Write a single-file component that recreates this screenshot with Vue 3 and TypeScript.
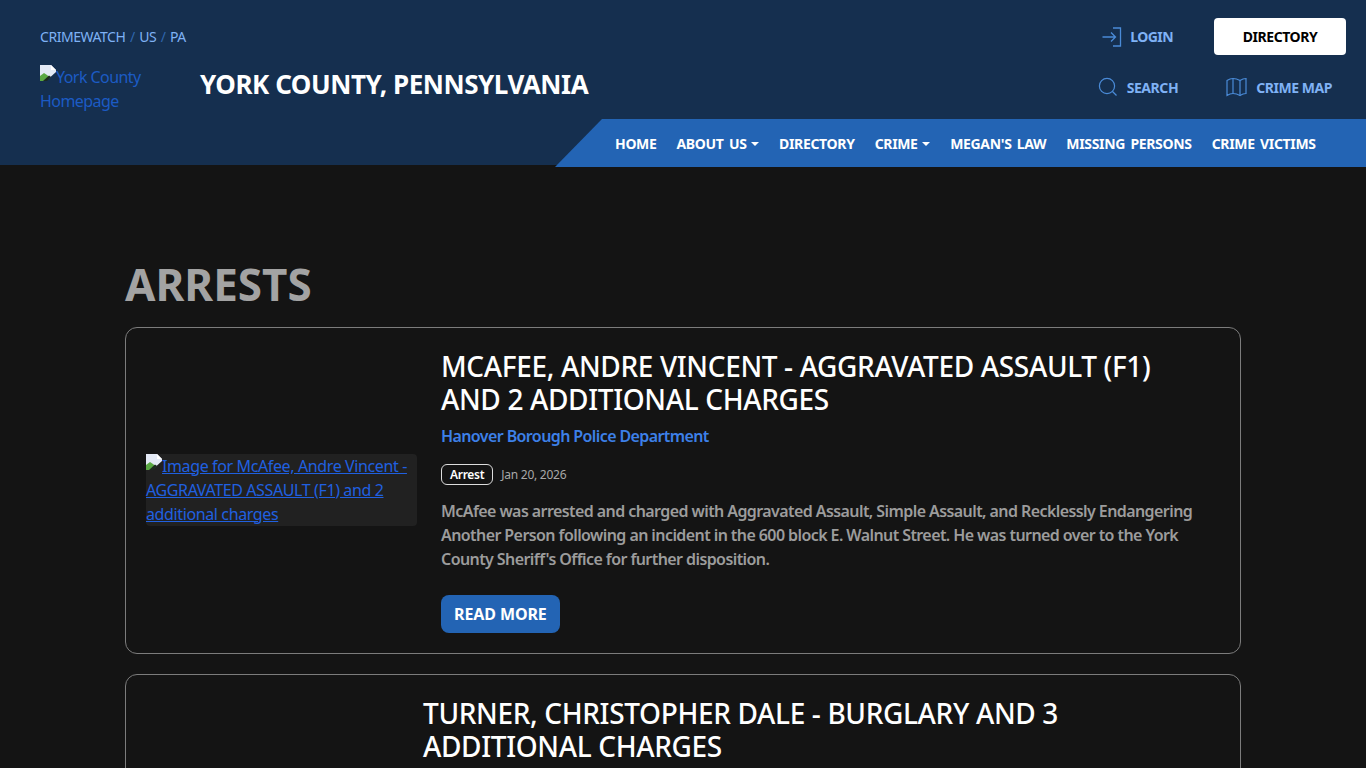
<template>
  <div class="page">
    <header class="site-header">
      <div class="top">
        <div class="brand">
          <div class="crumbs">
            <a>CRIMEWATCH</a><span class="sep">/</span><a>US</a><span class="sep">/</span><a>PA</a>
          </div>
          <div class="brand-row">
            <a class="logo"><svg class="broken" width="16" height="16" viewBox="0 0 16 16"><path d="M0 0H11L16 5V7L6 16H0Z" fill="#e3e9f5" /><path d="M11 0V5H16Z" fill="#fff" /><path d="M0 16V11L4 8L7 10L10 12.5L6 16Z" fill="#5aa843" /><path d="M3 16L9 10.5L11 12L7 16Z" fill="#1d2a1f" /></svg>York County Homepage</a>
            <div class="county">YORK COUNTY, PENNSYLVANIA</div>
          </div>
        </div>
        <div class="tools">
          <div class="tool-row first">
            <a class="login">
              <svg width="20" height="20" viewBox="0 0 20 20" fill="none" stroke="#4a8bd8" stroke-width="1.3"><path d="M0.5 10H13M9 5.5L13.5 10L9 14.5" /><path d="M11 1H18.5V19H11" /></svg>
              LOGIN
            </a>
            <a class="dir-btn">DIRECTORY</a>
          </div>
          <div class="tool-row second">
            <a class="tool">
              <svg width="20" height="20" viewBox="0 0 20 20" fill="none" stroke="#4a8bd8" stroke-width="1.2"><circle cx="9" cy="9" r="7.6" /><path d="M14.5 14.5L18.5 18.5" /></svg>
              SEARCH
            </a>
            <a class="tool">
              <svg width="21" height="20" viewBox="0 0 21 20" fill="none" stroke="#4a8bd8" stroke-width="1.2"><path d="M1 3.5Q4 1.5 7 1.5Q10.5 1.5 14 3.5Q17 1.5 20 1.5V16.5Q17 16.5 14 18.5Q10.5 16.5 7 16.5Q4 16.5 1 18.5Z" /><path d="M7 1.5V16.5M14 3.5V18.5" /></svg>
              CRIME MAP
            </a>
          </div>
        </div>
      </div>
      <nav class="main-nav">
        <a v-for="item in navItems" :key="item.label" :class="{ caret: item.caret }">{{ item.label }}</a>
      </nav>
    </header>

    <main class="content">
      <h1>ARRESTS</h1>
      <article v-for="(a, i) in arrests" :key="i" class="card" :class="{ short: !a.agency }">
        <div class="thumb-col">
          <a v-if="a.alt" class="thumb"><svg class="broken" width="16" height="16" viewBox="0 0 16 16"><path d="M0 0H11L16 5V7L6 16H0Z" fill="#e3e9f5" /><path d="M11 0V5H16Z" fill="#fff" /><path d="M0 16V11L4 8L7 10L10 12.5L6 16Z" fill="#5aa843" /><path d="M3 16L9 10.5L11 12L7 16Z" fill="#1d2a1f" /></svg>{{ a.alt }}</a>
        </div>
        <div class="body">
          <h2>{{ a.title }}</h2>
          <template v-if="a.agency">
            <a class="agency">{{ a.agency }}</a>
            <div class="meta"><span class="badge">Arrest</span><span class="date">{{ a.date }}</span></div>
            <p>{{ a.text }}</p>
            <a class="more">READ MORE</a>
          </template>
        </div>
      </article>
    </main>
  </div>
</template>

<script setup lang="ts">
const navItems = [
  { label: 'HOME' },
  { label: 'ABOUT US', caret: true },
  { label: 'DIRECTORY' },
  { label: 'CRIME', caret: true },
  { label: "MEGAN'S LAW" },
  { label: 'MISSING PERSONS' },
  { label: 'CRIME VICTIMS' }
]

const arrests = [
  {
    title: 'MCAFEE, ANDRE VINCENT - AGGRAVATED ASSAULT (F1) AND 2 ADDITIONAL CHARGES',
    alt: 'Image for McAfee, Andre Vincent - AGGRAVATED ASSAULT (F1) and 2 additional charges',
    agency: 'Hanover Borough Police Department',
    date: 'Jan 20, 2026',
    text: "McAfee was arrested and charged with Aggravated Assault, Simple Assault, and Recklessly Endangering Another Person following an incident in the 600 block E. Walnut Street. He was turned over to the York County Sheriff's Office for further disposition."
  },
  {
    title: 'TURNER, CHRISTOPHER DALE - BURGLARY AND 3 ADDITIONAL CHARGES',
    alt: '',
    agency: '',
    date: '',
    text: ''
  }
]
</script>

<style>
html, body {
  margin: 0;
  background: #141414;
  height: 768px;
  overflow: hidden;
}
</style>

<style scoped>
.page {
  font-family: "Noto Sans", "Open Sans", sans-serif;
  color: #fff;
  background: #141414;
  min-height: 768px;
}

.site-header {
  background: #152f4f;
  height: 165px;
  display: flex;
  flex-direction: column;
}

.top {
  display: flex;
  justify-content: space-between;
  flex: none;
  height: 119px;
  padding: 0 20px 0 40px;
}

.crumbs {
  margin-top: 27px;
  font-size: 14px;
  line-height: 20px;
  color: #7fb2f5;
  letter-spacing: -0.45px;
}

.sep {
  color: #2f66ad;
  margin: 0 4.5px;
}

.brand-row {
  display: flex;
  margin-top: 18px;
}

.logo {
  width: 160px;
  font-size: 16px;
  line-height: 24px;
  color: #1c5bc4;
  letter-spacing: -0.55px;
}

.broken {
  vertical-align: 2px;
}

.county {
  font-size: 26px;
  line-height: 38px;
  font-weight: 700;
  letter-spacing: -0.45px;
  white-space: nowrap;
}

.tools {
  display: flex;
  flex-direction: column;
  align-items: flex-end;
}

.tool-row {
  display: flex;
  align-items: center;
}

.tool-row.first {
  margin-top: 18px;
  height: 37px;
  gap: 41px;
}

.tool-row.second {
  margin-top: 14px;
  height: 36px;
  gap: 48px;
  padding-right: 14px;
}

.login, .tool {
  display: flex;
  align-items: center;
  font-size: 14px;
  font-weight: 700;
  letter-spacing: -0.45px;
  color: #7fb2f5;
}

.login { gap: 8px; letter-spacing: -0.55px; }
.tool { gap: 9px; }

.dir-btn {
  width: 132px;
  height: 37px;
  background: #fff;
  color: #000;
  border-radius: 4px;
  display: flex;
  align-items: center;
  justify-content: center;
  font-size: 14px;
  font-weight: 700;
  letter-spacing: -0.45px;
}

.main-nav {
  align-self: flex-end;
  flex: none;
  width: 811px;
  height: 48px;
  box-sizing: border-box;
  padding-left: 60px;
  background: #2364b4;
  clip-path: polygon(47px 0, 100% 0, 100% 100%, 0 100%);
  display: flex;
  align-items: center;
  gap: 20px;
  font-size: 14px;
  font-weight: 700;
  letter-spacing: -0.33px;
  word-spacing: 2px;
  color: #fff;
  position: relative;
  z-index: 1;
}

.caret::after {
  content: "";
  display: inline-block;
  margin-left: 4.5px;
  vertical-align: 3px;
  border-top: 4px solid #fff;
  border-left: 4px solid transparent;
  border-right: 4px solid transparent;
}

.content {
  width: 1116px;
  margin: 0 auto;
  padding-top: 92px;
}

h1 {
  margin: 0 0 16px;
  font-size: 44px;
  line-height: 54px;
  font-weight: 700;
  color: #a3a3a3;
}

.card {
  display: flex;
  box-sizing: border-box;
  height: 327px;
  margin-bottom: 20px;
  padding: 20px;
  gap: 24px;
  border: 1px solid #7c7c7c;
  border-radius: 12px;
}

.card.short {
  height: 200px;
}

.thumb-col {
  width: 271px;
  flex: none;
  display: flex;
  align-items: center;
  padding-bottom: 2px;
}

.card.short .thumb-col {
  width: 253px;
}

.thumb {
  display: block;
  background: #212121;
  border-radius: 4px;
  color: #2060e0;
  text-decoration: underline;
  font-size: 16px;
  line-height: 24px;
  letter-spacing: -0.38px;
}

.body {
  flex: 1;
  min-width: 0;
}

h2 {
  margin: 1.6px 0 7.4px;
  padding-right: 20px;
  font-size: 28px;
  line-height: 33.6px;
  font-weight: 500;
  letter-spacing: -0.35px;
  color: #fff;
}

.agency {
  display: block;
  font-size: 16px;
  line-height: 24px;
  font-weight: 600;
  letter-spacing: -0.6px;
  color: #3d80e8;
}

.meta {
  display: flex;
  align-items: center;
  gap: 8px;
  margin-top: 16px;
}

.badge {
  border: 1px solid #ddd;
  border-radius: 6px;
  font-size: 12px;
  line-height: 19px;
  font-weight: 600;
  padding: 0 8px;
  letter-spacing: -0.3px;
  color: #fff;
}

.date {
  font-size: 12px;
  letter-spacing: -0.25px;
  color: #a8a8a8;
}

p {
  margin: 14px 0 0;
  font-size: 16px;
  line-height: 24px;
  font-weight: 600;
  letter-spacing: -0.58px;
  color: #9c9c9c;
}

.more {
  display: inline-block;
  margin-top: 24px;
  padding: 0 13px;
  height: 38px;
  line-height: 38px;
  background: #2364b4;
  border-radius: 8px;
  font-size: 16px;
  font-weight: 700;
  letter-spacing: -0.1px;
  color: #fff;
}
</style>
